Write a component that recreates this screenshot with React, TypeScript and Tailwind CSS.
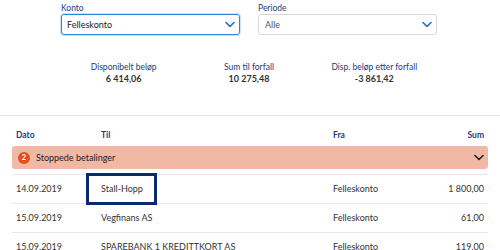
import React from "react";

const Chevron = ({ className }: { className?: string }) => (
  <svg width="10" height="7" viewBox="0 0 10 7" className={className} fill="none">
    <path d="M1 1.5 L5 5.5 L9 1.5" stroke="currentColor" strokeWidth="1.6" strokeLinecap="round" strokeLinejoin="round" />
  </svg>
);

const rows = [
  { dato: "14.09.2019", til: "Stall-Hopp", fra: "Felleskonto", sum: "1 800,00", focus: true },
  { dato: "15.09.2019", til: "Vegfinans AS", fra: "Felleskonto", sum: "61,00" },
  { dato: "15.09.2019", til: "SPAREBANK 1 KREDITTKORT AS", fra: "Felleskonto", sum: "119,00" },
];

export default function App() {
  return (
    <div className="w-[500px] h-[250px] overflow-hidden bg-white text-[#333]" style={{ fontFamily: "Lato, 'Open Sans', sans-serif" }}>
      <div className="w-[376px] ml-[61px] pt-[3px]">
        <div className="grid grid-cols-2 gap-[18px]">
          <div>
            <div className="text-[8.5px] leading-[11px] text-[#1f3a7a]">Konto</div>
            <div className="h-[21px] border border-[#2f86d6] rounded-[3px] flex items-center justify-between pl-[5px] pr-[4px] shadow-[0_0_0_1px_rgba(47,134,214,0.25)]">
              <span className="text-[9px] text-[#222]">Felleskonto</span>
              <Chevron className="text-[#1f6fc8]" />
            </div>
          </div>
          <div>
            <div className="text-[8.5px] leading-[11px] text-[#1f3a7a]">Periode</div>
            <div className="h-[21px] border border-[#d8d8d8] rounded-[3px] flex items-center justify-between pl-[6px] pr-[4px]">
              <span className="text-[9px] text-[#555]">Alle</span>
              <Chevron className="text-[#1f6fc8]" />
            </div>
          </div>
        </div>
        <div className="grid grid-cols-3 mt-[26px] text-center">
          {[
            ["Disponibelt beløp", "6 414,06"],
            ["Sum til forfall", "10 275,48"],
            ["Disp. beløp etter forfall", "-3 861,42"],
          ].map(([l, v]) => (
            <div key={l}>
              <div className="text-[8.5px] leading-[12px] text-[#1f3a7a]">{l}</div>
              <div className="text-[9px] leading-[12px] font-bold text-[#333]">{v}</div>
            </div>
          ))}
        </div>
      </div>
      <div className="mt-[30px] border-t border-[#e6e6e6]" />
      <div className="px-[12px] mt-[14px]">
        <div className="grid grid-cols-[85px_232px_1fr_auto] px-[4px] text-[8.5px] leading-[11px] font-bold text-[#1f3a7a]">
          <div>Dato</div>
          <div>Til</div>
          <div>Fra</div>
          <div className="text-right">Sum</div>
        </div>
        <div className="mt-[5px] h-[23px] rounded-[3px] bg-[#f2b8a6] flex items-center justify-between pl-[6px] pr-[4px]">
          <div className="flex items-center gap-[6px]">
            <div className="w-[12px] h-[12px] rounded-full bg-[#e0501c] text-white text-[7.5px] font-bold flex items-center justify-center">2</div>
            <span className="text-[9px] text-[#222]">Stoppede betalinger</span>
          </div>
          <Chevron className="text-[#222]" />
        </div>
        <div className="mt-[5px] border-t border-[#e8e8e8]">
          {rows.map((r, i) => (
            <div key={i} className="relative grid grid-cols-[85px_232px_1fr_auto] items-center px-[4px] h-[29px] border-b border-[#e8e8e8] text-[9px] text-[#333]">
              <div>{r.dato}</div>
              <div>{r.til}</div>
              <div>{r.fra}</div>
              <div className="text-right">{r.sum}</div>
              {r.focus && (
                <div className="absolute left-[74px] top-[-2px] w-[71px] h-[32px] border-[3px] border-[#0b2a6b]" />
              )}
            </div>
          ))}
        </div>
      </div>
    </div>
  );
}
